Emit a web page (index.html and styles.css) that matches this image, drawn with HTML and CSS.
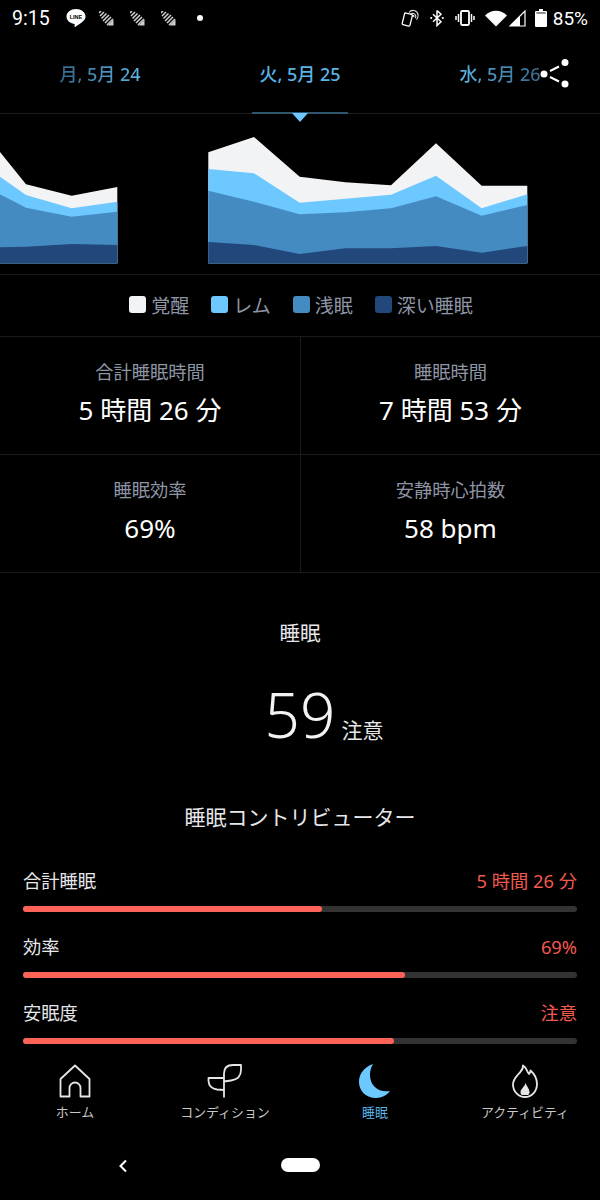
FILE: index.html
```html
<!DOCTYPE html>
<html lang="ja">
<head>
  <meta charset="UTF-8" />
  <meta name="viewport" content="width=device-width, initial-scale=1.0" />
  <title>睡眠</title>
  <link rel="stylesheet" href="styles.css">
</head>
<body>
  <div class="status">
    <span class="time">9:15</span>
    <span class="slot">
      <svg width="20" height="20" viewBox="0 0 20 20"><path d="M10 1C4.700 1 .5 4.300 .5 8.500c0 3.800 3.300 6.800 7.700 7.400.5.100.6.400.5.900l-.2 1.500c0 .6.400.8 1 .4 2.500-1.500 6.700-4.200 8.500-6.400 1.100-1.200 1.500-2.500 1.500-3.800C19.500 4.300 15.300 1 10 1z" fill="#fff"/><text x="10" y="10.700" class="line-word">LINE</text></svg>
    </span>
    <span class="slot">
      <svg width="15" height="15" viewBox="0 0 15 15"><path class="hatch" d="M2 0L0 2M5 1L1 5M7.500 2.500L2.500 7.500M10 4L4 10M12 6L6 12M14 8L8 14"/><path d="M14.500 8.500V14.500H8.500z" fill="#ccc"/></svg>
    </span>
    <span class="slot">
      <svg width="15" height="15" viewBox="0 0 15 15"><path class="hatch" d="M2 0L0 2M5 1L1 5M7.500 2.500L2.500 7.500M10 4L4 10M12 6L6 12M14 8L8 14"/><path d="M14.500 8.500V14.500H8.500z" fill="#ccc"/></svg>
    </span>
    <span class="slot">
      <svg width="15" height="15" viewBox="0 0 15 15"><path class="hatch" d="M2 0L0 2M5 1L1 5M7.500 2.500L2.500 7.500M10 4L4 10M12 6L6 12M14 8L8 14"/><path d="M14.500 8.500V14.500H8.500z" fill="#ccc"/></svg>
    </span>
    <span class="slot"><span class="dot"></span></span>

    <span class="status-right">
      <svg width="19" height="18" viewBox="0 0 19 18" class="i-nfc"><rect x="2.400" y="4.500" width="8" height="12" rx="1.200" transform="rotate(14 6 10)" fill="none" stroke="#fff" stroke-width="1.300"/><path d="M8 3.500a5 5 0 0 1 9 3.500c0 1.500-.6 2.700-1.500 3.600M9.500 5.500a3 3 0 0 1 5.300 1.700c0 .8-.3 1.400-.8 2" fill="none" stroke="#ddd" stroke-width="1.100"/><circle cx="12.500" cy="7" r="1" fill="#fff"/></svg>
      <svg width="14" height="18" viewBox="0 0 14 18" class="i-bt"><path d="M7 1.500V16.500L11 12.700L3 5.300M7 1.500L11 5.300L3 12.700" fill="none" stroke="#fff" stroke-width="1.500"/><circle cx="1.200" cy="9" r="1.100" fill="#fff"/><circle cx="12.800" cy="9" r="1.100" fill="#fff"/></svg>
      <svg width="20" height="16" viewBox="0 0 20 16" class="i-vib"><rect x="6" y="1" width="8" height="14" rx="1.200" fill="none" stroke="#fff" stroke-width="1.800"/><path d="M3.500 4V12M1 6V10M16.500 4V12M19 6V10" stroke="#fff" stroke-width="1.500"/></svg>
      <svg width="22" height="17" viewBox="0 0 22 17" class="i-wifi"><path d="M0 5.500C3 2.500 6.800 .8 11 .8s8 1.700 11 4.700L11 16.500z" fill="#fff"/></svg>
      <svg width="17" height="17" viewBox="0 0 17 17" class="i-sig"><path d="M1 16L16 1V16z" fill="none" stroke="#fff" stroke-width="1.200"/><path d="M1 16L11 6V16z" fill="#fff"/></svg>
      <svg width="12" height="18" viewBox="0 0 12 18" class="i-bat"><path d="M4 0H8V2H11a1 1 0 0 1 1 1V17a1 1 0 0 1-1 1H1a1 1 0 0 1-1-1V3a1 1 0 0 1 1-1H4z" fill="#fff"/><rect x="1.300" y="3.300" width="9.400" height="1.300" fill="#555"/></svg>
      <span class="pct">85%</span>
    </span>
  </div>

  <header class="dates">
    <span class="date fade-in">月, 5月 24</span>
    <span class="date">火, 5月 25</span>
    <span class="date fade-out">水, 5月 26</span>
    <svg class="share" width="30" height="34" viewBox="0 0 30 34"><circle cx="5" cy="17" r="3.500"/><circle cx="26" cy="5.500" r="3.500"/><circle cx="26" cy="27" r="3.500"/><path d="M11 14L20 9.500M11 20L20 24.500" fill="none" stroke="#fff" stroke-width="2"/></svg>
    <span class="marker"></span>
    <span class="pointer"></span>
  </header>

  <section class="chart">
    <svg width="600" height="160" viewBox="0 114 600 160">
      <polygon fill="#f2f3f5" points="0,152 26,184.300 71.700,195.700 117.300,187 117.300,263.300 0,263.300"/>
      <polygon fill="#6cc8ff" points="0,176.700 26,195 71.700,208.300 117.300,201.700 117.300,263.300 0,263.300"/>
      <polygon fill="#448bc1" points="0,194.300 26,207.700 71.700,216.700 117.300,211.700 117.300,263.300 0,263.300"/>
      <polygon fill="#22477b" points="0,247.300 26,246.700 71.700,244 117.300,245 117.300,263.300 0,263.300"/>

      <polygon fill="#f2f3f5" points="208.300,152.300 254,137 299.700,176.700 345.400,182.300 391,185.300 436,143.300 481.700,185.700 527.300,185.700 527.300,263.300 208.300,263.300"/>
      <polygon fill="#6cc8ff" points="208.300,169 254,173.300 299.700,202.700 345.400,198.700 391,194.700 436,175.700 481.700,208.300 527.300,194.300 527.300,263.300 208.300,263.300"/>
      <polygon fill="#448bc1" points="208.300,190.700 254,201.700 299.700,214.300 345.400,212.300 391,208.300 436,196.300 481.700,215.700 527.300,205 527.300,263.300 208.300,263.300"/>
      <polygon fill="#22477b" points="208.300,242 254,245 299.700,254 345.400,248.300 391,248.300 436,246 481.700,252.700 527.300,246 527.300,263.300 208.300,263.300"/>
    </svg>
  </section>

  <div class="legend">
    <span class="key"><i class="swatch awake"></i>覚醒</span>
    <span class="key"><i class="swatch rem"></i>レム</span>
    <span class="key"><i class="swatch light"></i>浅眠</span>
    <span class="key"><i class="swatch deep"></i>深い睡眠</span>
  </div>

  <section class="stats">
    <div class="stat">
      <div class="stat-label">合計睡眠時間</div>
      <div class="stat-value">5 時間 26 分</div>
    </div>
    <div class="stat">
      <div class="stat-label">睡眠時間</div>
      <div class="stat-value">7 時間 53 分</div>
    </div>
    <div class="stat">
      <div class="stat-label">睡眠効率</div>
      <div class="stat-value">69%</div>
    </div>
    <div class="stat">
      <div class="stat-label">安静時心拍数</div>
      <div class="stat-value">58 bpm</div>
    </div>
  </section>

  <main class="score">
    <h2 class="score-title">睡眠</h2>
    <div class="score-line"><span class="score-num">59</span><span class="score-word">注意</span></div>
    <h3 class="contrib-title">睡眠コントリビューター</h3>

    <div class="contrib-list">
      <div class="contrib">
        <div class="contrib-head"><span>合計睡眠</span><span class="bad">5 時間 26 分</span></div>
        <div class="track"><div class="fill" style="width: 54%"></div></div>
      </div>
      <div class="contrib">
        <div class="contrib-head"><span>効率</span><span class="bad">69%</span></div>
        <div class="track"><div class="fill" style="width: 69%"></div></div>
      </div>
      <div class="contrib">
        <div class="contrib-head"><span>安眠度</span><span class="bad">注意</span></div>
        <div class="track"><div class="fill" style="width: 67%"></div></div>
      </div>
    </div>
  </main>

  <nav class="tabs">
    <a class="tab">
      <svg width="32" height="34" viewBox="0 0 32 34"><path d="M16 1.500L1.500 15V32.500H10.500V24a5.500 5.500 0 0 1 11 0V32.500H30.500V15z" fill="none" stroke="#e6e6e6" stroke-width="1.800" stroke-linejoin="round"/></svg>
      <span>ホーム</span>
    </a>
    <a class="tab">
      <svg width="36" height="34" viewBox="0 0 36 34"><path d="M17 33.500V9.500Q17 1 26 1H34V6Q34 15 24 16.500L17 17.500M17 14H1.500V17Q2 24.500 10 25.500L17 26" fill="none" stroke="#e6e6e6" stroke-width="1.800" stroke-linejoin="round"/></svg>
      <span>コンディション</span>
    </a>
    <a class="tab active">
      <svg width="32" height="34" viewBox="0 0 32 34"><path d="M14 0C5 3 0 10 0 18C0 27 7 34 17 34C23 34 28 31 31 27C20 29 11 22 11 11C11 7 12 3 14 0Z" fill="#6cc8ff"/></svg>
      <span>睡眠</span>
    </a>
    <a class="tab">
      <svg width="26" height="34" viewBox="0 0 26 34"><path d="M11 1.500C15 4 14.500 7 17 10C18 8.500 18.500 8 18.500 6.500C22.500 10 25 14.500 25 20C25 27.500 19.500 33 13 33C6.500 33 1 27.500 1 20.500C1 15.500 4 13 6.500 10C9 7 11.500 5.500 11 1.500Z" fill="none" stroke="#e6e6e6" stroke-width="1.800" stroke-linejoin="round"/><path d="M13.500 19C14.500 22 17.500 25 17.500 28C17.500 29.500 17 30.500 16 31H10C9 30.500 8.500 29.500 8.500 28C8.500 25 12.500 23 13.500 19Z" fill="#e6e6e6"/></svg>
      <span>アクティビティ</span>
    </a>
  </nav>

  <div class="gesture">
    <svg class="back" width="10" height="14" viewBox="0 0 10 14"><path d="M8 1.500L2.500 7L8 12.500" fill="none" stroke="#fff" stroke-width="2"/></svg>
    <span class="pill"></span>
  </div>
</body>
</html>
```
FILE: styles.css
```css
:root {
  --sky: #6cc8ff;
  --date: #5ab4e5;
  --date-dim: #36688a;
  --line: #1b1b1b;
  --muted: #8d95a5;
  --red: #ff6257;
}

* { box-sizing: border-box; }

html, body {
  height: 100%;
}

body {
  margin: 0;
  width: 600px;
  height: 1200px;
  overflow: hidden;
  display: flex;
  flex-direction: column;
  background: #000;
  color: #e6e7ea;
  font-family: "Noto Sans", "Noto Sans CJK JP", sans-serif;
}

/* status bar */
.status {
  height: 36px;
  flex: none;
  display: flex;
  align-items: center;
  padding: 0 12px;
  color: #fff;
  font-family: Roboto, sans-serif;
}

.time {
  width: 48px;
  font-size: 19.500px;
}

.slot {
  width: 31px;
  display: flex;
  justify-content: center;
}

.line-word {
  font-family: "Liberation Sans", sans-serif;
  font-size: 5.500px;
  font-weight: 700;
  text-anchor: middle;
  fill: #000;
}

.hatch {
  stroke: #ccc;
  stroke-width: 1.600;
  fill: none;
}

.dot {
  width: 6px;
  height: 6px;
  border-radius: 50%;
  background: #fff;
}

.status-right {
  margin-left: auto;
  display: flex;
  align-items: center;
}

.i-nfc { margin-right: 10px; }
.i-bt { margin-right: 11px; }
.i-vib { margin-right: 10px; }
.i-wifi { margin-right: 2px; }
.i-sig { margin-right: 9px; }
.i-bat { margin-right: 6px; }

.pct {
  font-size: 19px;
}

/* date row */
.dates {
  position: relative;
  height: 78px;
  flex: none;
  display: grid;
  grid-template-columns: repeat(3, 200px);
  align-items: center;
  justify-items: center;
  padding-bottom: 4px;
  border-bottom: 1px solid var(--line);
}

.date {
  font-size: 18px;
  font-weight: 500;
  color: var(--date);
}

.fade-in {
  background: linear-gradient(90deg, var(--date-dim), var(--date));
  -webkit-background-clip: text;
  background-clip: text;
  color: transparent;
}

.fade-out {
  background: linear-gradient(90deg, var(--date), var(--date-dim));
  -webkit-background-clip: text;
  background-clip: text;
  color: transparent;
}

.share {
  position: absolute;
  left: 539px;
  top: 21px;
  fill: #fff;
}

.marker {
  position: absolute;
  left: 252px;
  bottom: -1px;
  width: 96px;
  height: 2px;
  background: #2f556f;
}

.pointer {
  position: absolute;
  left: 292px;
  top: 77px;
  border-left: 8px solid transparent;
  border-right: 8px solid transparent;
  border-top: 9px solid var(--sky);
}

/* chart */
.chart {
  height: 161px;
  flex: none;
  border-bottom: 1px solid var(--line);
}

.chart svg { display: block; }

.legend {
  height: 62px;
  flex: none;
  display: flex;
  justify-content: center;
  align-items: center;
  gap: 22px;
  padding: 0 0 2px 2px;
  border-bottom: 1px solid var(--line);
}

.key {
  display: flex;
  align-items: center;
  gap: 5px;
  font-size: 19px;
  color: var(--muted);
}

.swatch {
  width: 17px;
  height: 17px;
  border-radius: 3px;
}

.awake { background: #f2f3f5; }
.rem { background: var(--sky); }
.light { background: #448bc1; }
.deep { background: #22477b; }

/* stats grid */
.stats {
  flex: none;
  display: grid;
  grid-template-columns: 301px 299px;
}

.stat {
  height: 118px;
  padding-top: 22px;
  text-align: center;
  border-bottom: 1px solid var(--line);
}

.stat:nth-child(odd) {
  border-right: 1px solid var(--line);
}

.stat-label {
  font-size: 18.300px;
  line-height: 26px;
  color: var(--muted);
}

.stat-value {
  margin-top: 7px;
  font-size: 26px;
  line-height: 36px;
  color: #fff;
}

/* score */
.score {
  flex: 1;
  min-height: 0;
  overflow: hidden;
  padding: 0 23px;
}

.score-title {
  margin: 45px 0 0;
  font-size: 20.500px;
  line-height: 30px;
  font-weight: 400;
  text-align: center;
}

.score-line {
  margin-top: 24px;
  display: flex;
  justify-content: center;
  align-items: baseline;
  gap: 6px;
  padding-left: 48px;
}

.score-num {
  font-size: 62px;
  font-weight: 300;
  line-height: 84px;
  color: #f2f3f5;
}

.score-word {
  font-size: 21px;
}

.contrib-title {
  margin: 46px 0 0;
  font-size: 21px;
  line-height: 30px;
  font-weight: 400;
  text-align: center;
}

.contrib-list {
  margin-top: 35px;
}

.contrib {
  height: 66px;
}

.contrib-head {
  display: flex;
  justify-content: space-between;
  font-size: 18.300px;
  line-height: 28px;
  height: 39px;
}

.bad { color: #f2594f; }

.track {
  height: 6px;
  border-radius: 3px;
  background: #333;
}

.fill {
  height: 6px;
  border-radius: 3px;
  background: var(--red);
}

/* bottom nav */
.tabs {
  flex: none;
  height: 84px;
  display: grid;
  grid-template-columns: repeat(4, 150px);
  padding-top: 18px;
  background: #000;
}

.tab {
  display: flex;
  flex-direction: column;
  align-items: center;
  font-size: 12.900px;
  line-height: 18px;
  color: #c8c8c8;
}

.tab svg { margin-bottom: 5px; }

.tab.active { color: var(--date); }

.gesture {
  flex: none;
  height: 70px;
  display: flex;
  align-items: center;
  justify-content: center;
  position: relative;
}

.back {
  position: absolute;
  left: 118px;
  top: 29px;
}

.pill {
  width: 39px;
  height: 14px;
  border-radius: 7px;
  background: #fff;
}
```
